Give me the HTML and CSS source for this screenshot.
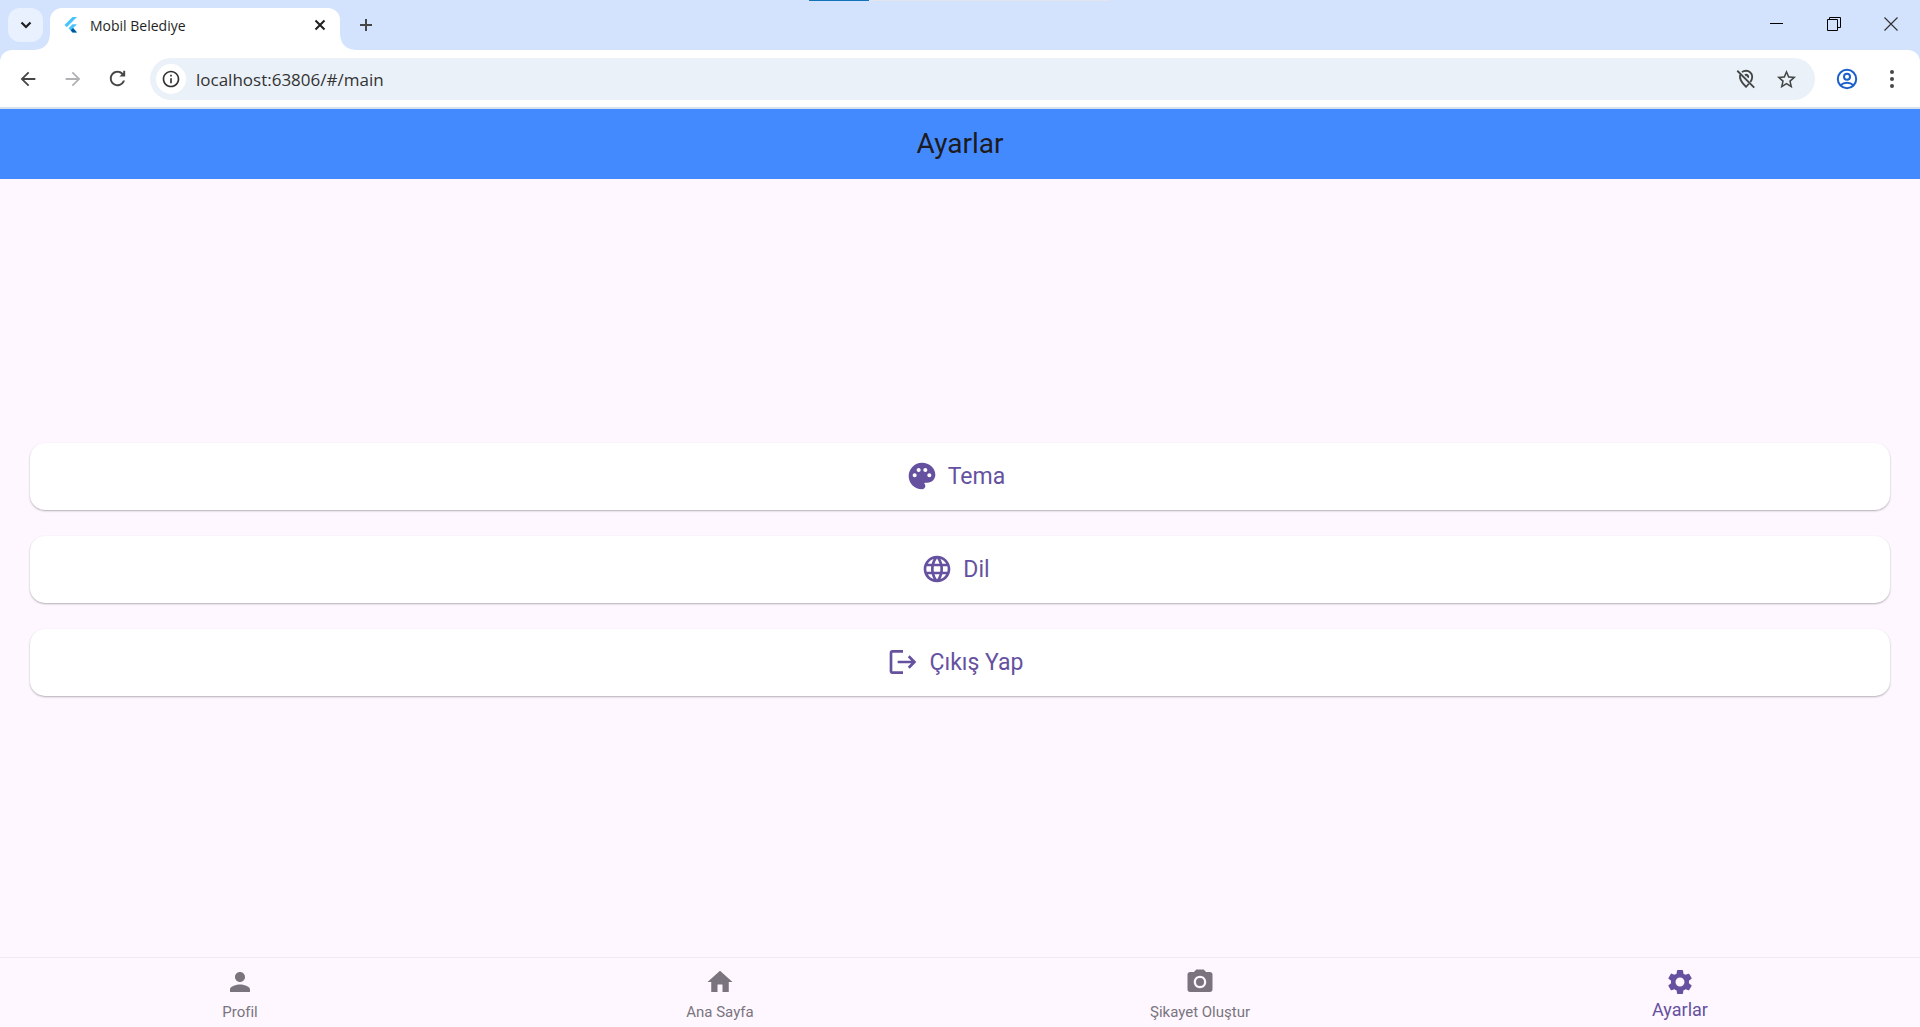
FILE: index.html
```html
<!DOCTYPE html>
<html lang="tr">
<head>
	<meta charset="UTF-8" />
	<title>Mobil Belediye</title>
	<link rel="stylesheet" href="styles.css">
</head>
<body>
	<div class="wrap">
		<div class="progress"></div>
		<div class="browser">
			<div class="tabs">
				<button class="tab-search" aria-label="Sekme ara">
					<svg width="12" height="12" viewBox="0 0 12 12"><path d="M1.500 3.500L6 8l4.500-4.500" fill="none" stroke="#1f1f1f" stroke-width="2.200"/></svg>
				</button>
				<div class="tab active">
					<svg width="14" height="16" viewBox="0 0 14 16">
						<path d="M8.500 0H13L2.700 10.200.5 7.900z" fill="#47c5fb"/>
						<path d="M8.500 7.300H13L9.200 11 13 15.500H8.500L4.500 11.200z" fill="#47c5fb"/>
						<path d="M6.700 13.300L9 11l4 4.500H8.500z" fill="#00569e"/>
					</svg>
					<span class="tab-title">Mobil Belediye</span>
					<button class="tab-close" aria-label="Kapat">
						<svg width="12" height="12" viewBox="0 0 12 12"><path d="M1.500 1.500l9 9M10.500 1.500l-9 9" stroke="#1f1f1f" stroke-width="2"/></svg>
					</button>
				</div>
				<button class="tab-new" aria-label="Yeni sekme">
					<svg width="14" height="14" viewBox="0 0 14 14"><path d="M7 1v12M1 7h12" stroke="#444746" stroke-width="2"/></svg>
				</button>
				<div class="win">
					<button aria-label="Simge durumuna küçült"><svg width="14" height="14" viewBox="0 0 14 14"><path d="M0 6.500h13" stroke="#000"/></svg></button>
					<button aria-label="Geri yükle"><svg width="14" height="14" viewBox="0 0 14 14"><path d="M.5 2.500h10v11H.5zM2.500 2.500v-2h11v10H11" fill="none" stroke="#000"/></svg></button>
					<button aria-label="Pencereyi kapat"><svg width="14" height="14" viewBox="0 0 14 14"><path d="M.5.5l13 13M13.500.5l-13 13" stroke="#333" stroke-width="1.200"/></svg></button>
				</div>
			</div>
			<div class="toolbar">
				<button class="tool" aria-label="Geri"><svg width="22" height="22" viewBox="0 0 24 24" fill="#444746"><path d="M20 11H7.830l5.590-5.590L12 4l-8 8 8 8 1.410-1.410L7.830 13H20v-2z"/></svg></button>
				<button class="tool" aria-label="İleri"><svg width="22" height="22" viewBox="0 0 24 24" fill="#b0b2b3"><path d="M12 4l-1.410 1.410L16.170 11H4v2h12.170l-5.580 5.590L12 20l8-8z"/></svg></button>
				<button class="tool" aria-label="Yenile"><svg width="23" height="23" viewBox="0 0 24 24" fill="#444746"><path d="M17.650 6.350C16.200 4.900 14.210 4 12 4c-4.420 0-7.990 3.580-7.990 8s3.570 8 7.990 8c3.730 0 6.840-2.550 7.730-6h-2.080c-.82 2.330-3.040 4-5.650 4-3.310 0-6-2.690-6-6s2.690-6 6-6c1.660 0 3.140.69 4.220 1.780L14 10h6V4h-2v2z"/></svg></button>
				<div class="address">
					<button class="info" aria-label="Site bilgileri"><svg width="20" height="20" viewBox="0 0 24 24" fill="#333"><path d="M11 7h2v2h-2zm0 4h2v6h-2zm1-9C6.480 2 2 6.480 2 12s4.480 10 10 10 10-4.480 10-10S17.520 2 12 2zm0 18c-4.410 0-8-3.590-8-8s3.590-8 8-8 8 3.590 8 8-3.590 8-8 8z"/></svg></button>
					<input type="text" aria-label="Adres" value="localhost:63806/#/main">
					<button class="addr-btn" aria-label="Konum engellendi"><svg width="22" height="22" viewBox="0 0 24 24" fill="none" stroke="#444746" stroke-width="2"><path d="M2.500 3L21 21.500M7.500 4.500C8.800 3.500 10.300 3 12 3c3.600 0 6.800 2.800 6.800 6.600 0 1.800-.7 3.700-2 5.600M5.500 7.500c-.9 4.300 1.700 8.500 6.500 13 1.200-1.200 2.200-2.300 3-3.300"/><path d="M11 8a2 2 0 0 1 3 2.500" stroke-width="2.500"/></svg></button>
					<button class="addr-btn" aria-label="Yer işareti"><svg width="23" height="23" viewBox="0 0 24 24" fill="#444746"><path d="M22 9.240l-7.190-.62L12 2 9.190 8.630 2 9.240l5.460 4.730L5.820 21 12 17.270 18.180 21l-1.630-7.030L22 9.240zM12 15.400l-3.760 2.270 1-4.280-3.320-2.880 4.380-.38L12 6.100l1.710 4.040 4.380.38-3.320 2.880 1 4.280L12 15.400z"/></svg></button>
				</div>
				<button class="tool" aria-label="Hesap"><svg width="24" height="24" viewBox="0 0 24 24" fill="none" stroke="#1a5fcb" stroke-width="2"><circle cx="12" cy="12" r="9.200"/><circle cx="12" cy="9.700" r="3"/><path d="M5.500 18.200c3.700-3.200 9.300-3.200 13 0"/></svg></button>
				<button class="tool" aria-label="Menü"><svg width="24" height="24" viewBox="0 0 24 24" fill="#444746"><circle cx="12" cy="5" r="2"/><circle cx="12" cy="12" r="2"/><circle cx="12" cy="19" r="2"/></svg></button>
			</div>
		</div>
		<h1 class="header">Ayarlar</h1>
		<div class="content">
			<button class="item">
				<svg width="32" height="32" viewBox="0 0 24 24"><path d="M12 2C6.490 2 2 6.490 2 12s4.490 10 10 10c1.380 0 2.500-1.120 2.500-2.500 0-.61-.23-1.200-.64-1.670-.08-.1-.13-.21-.13-.33 0-.28.22-.5.5-.5H16c3.310 0 6-2.690 6-6 0-4.960-4.490-9-10-9zm-5.500 11c-.83 0-1.500-.67-1.500-1.500S5.670 10 6.500 10s1.500.67 1.500 1.500S7.330 13 6.500 13zm3-4C8.670 9 8 8.330 8 7.500S8.670 6 9.500 6s1.500.67 1.500 1.500S10.330 9 9.500 9zm5 0c-.83 0-1.500-.67-1.500-1.500S13.670 6 14.500 6s1.500.67 1.500 1.500S15.330 9 14.500 9zm3 4c-.83 0-1.500-.67-1.500-1.500s.67-1.500 1.500-1.500 1.500.67 1.500 1.500-.67 1.500-1.500 1.500z"/></svg>
				<span>Tema</span>
			</button>
			<button class="item">
				<svg width="32" height="32" viewBox="0 0 24 24"><path d="M11.990 2C6.470 2 2 6.480 2 12s4.470 10 9.990 10C17.520 22 22 17.520 22 12S17.520 2 11.990 2zm6.930 6h-2.950c-.32-1.250-.78-2.450-1.380-3.560 1.840.63 3.370 1.910 4.330 3.560zM12 4.040c.83 1.200 1.480 2.530 1.910 3.960h-3.820c.43-1.430 1.080-2.760 1.910-3.960zM4.260 14C4.100 13.360 4 12.690 4 12s.1-1.360.26-2h3.380c-.08.66-.14 1.320-.14 2s.06 1.340.14 2H4.260zm.82 2h2.950c.32 1.250.78 2.450 1.380 3.560-1.840-.63-3.370-1.900-4.330-3.560zm2.950-8H5.080c.96-1.660 2.490-2.930 4.330-3.560C8.810 5.550 8.350 6.750 8.030 8zM12 19.960c-.83-1.200-1.480-2.530-1.910-3.960h3.820c-.43 1.430-1.080 2.760-1.910 3.960zM14.340 14H9.660c-.09-.66-.16-1.320-.16-2s.07-1.350.16-2h4.680c.09.65.16 1.320.16 2s-.07 1.340-.16 2zm.25 5.560c.6-1.110 1.060-2.310 1.380-3.560h2.950c-.96 1.650-2.490 2.930-4.330 3.560zM16.360 14c.08-.66.14-1.320.14-2s-.06-1.340-.14-2h3.380c.16.64.26 1.310.26 2s-.1 1.360-.26 2h-3.380z"/></svg>
				<span>Dil</span>
			</button>
			<button class="item">
				<svg width="32" height="32" viewBox="0 0 24 24"><path d="M17 7l-1.410 1.410L18.170 11H8v2h10.170l-2.580 2.580L17 17l5-5zM4 5h8V3H4c-1.100 0-2 .9-2 2v14c0 1.100.9 2 2 2h8v-2H4V5z"/></svg>
				<span>Çıkış Yap</span>
			</button>
		</div>
		<nav class="nav">
			<a class="nav-item" href="#profil">
				<svg width="30" height="30" viewBox="0 0 24 24"><path d="M12 12c2.210 0 4-1.790 4-4s-1.790-4-4-4-4 1.790-4 4 1.790 4 4 4zm0 2c-2.670 0-8 1.340-8 4v2h16v-2c0-2.660-5.330-4-8-4z"/></svg>
				<span>Profil</span>
			</a>
			<a class="nav-item" href="#anasayfa">
				<svg width="30" height="30" viewBox="0 0 24 24"><path d="M10 20v-6h4v6h5v-8h3L12 3 2 12h3v8z"/></svg>
				<span>Ana Sayfa</span>
			</a>
			<a class="nav-item" href="#sikayet">
				<svg width="30" height="30" viewBox="0 0 24 24"><path d="M9 2L7.170 4H4c-1.100 0-2 .9-2 2v12c0 1.100.9 2 2 2h16c1.100 0 2-.9 2-2V6c0-1.100-.9-2-2-2h-3.170L15 2H9zm3 15c-2.760 0-5-2.240-5-5s2.240-5 5-5 5 2.240 5 5-2.240 5-5 5z"/><circle cx="12" cy="12" r="3.200"/></svg>
				<span>Şikayet Oluştur</span>
			</a>
			<a class="nav-item active" href="#ayarlar">
				<svg width="30" height="30" viewBox="0 0 24 24"><path d="M19.140 12.940c.04-.3.06-.61.06-.94 0-.32-.02-.64-.07-.94l2.030-1.580c.18-.14.23-.41.12-.61l-1.920-3.320c-.12-.22-.37-.29-.59-.22l-2.390.96c-.5-.38-1.030-.7-1.620-.94l-.36-2.540c-.04-.24-.24-.41-.48-.41h-3.840c-.24 0-.43.17-.47.41l-.36 2.540c-.59.24-1.130.57-1.620.94l-2.390-.96c-.22-.08-.47 0-.59.22L2.740 8.870c-.12.21-.08.47.12.61l2.030 1.580c-.05.3-.09.63-.09.94s.02.64.07.94l-2.030 1.580c-.18.14-.23.41-.12.61l1.920 3.320c.12.22.37.29.59.22l2.390-.96c.5.38 1.030.7 1.620.94l.36 2.540c.05.24.24.41.48.41h3.840c.24 0 .44-.17.47-.41l.36-2.540c.59-.24 1.130-.56 1.620-.94l2.390.96c.22.08.47 0 .59-.22l1.920-3.320c.12-.22.07-.47-.12-.61l-2.010-1.580zM12 15.600c-1.980 0-3.600-1.620-3.600-3.600s1.620-3.600 3.600-3.600 3.600 1.620 3.600 3.600-1.620 3.600-3.600 3.600z"/></svg>
				<span>Ayarlar</span>
			</a>
		</nav>
	</div>
</body>
</html>
```
FILE: styles.css
```css
*{
	box-sizing:border-box;
}
body{
	margin:0;
	font-family:Roboto,"Liberation Sans",sans-serif;
	background-color:#fef7ff;
}
button{
	border:0;
	padding:0;
	background:none;
	font-family:inherit;
	display:flex;
	align-items:center;
	justify-content:center;
}
svg{
	display:block;
	flex:none;
}
.wrap{
	position:relative;
	min-height:100vh;
	display:flex;
	flex-direction:column;
}
.progress{
	position:absolute;
	top:0;
	left:809px;
	width:300px;
	height:1px;
	background:linear-gradient(to right,#1173b8 60px,#e3e5ee 60px);
}
.browser{
	background-color:#d3e3fd;
}

/* tabs */
.tabs{
	height:50px;
	padding-left:8px;
	display:flex;
}
.tab-search{
	width:35px;
	height:34px;
	margin-top:8px;
	border-radius:12px;
	background-color:#e9f1fe;
}
.tab{
	position:relative;
	width:290px;
	height:42px;
	margin:8px 0 0 7px;
	padding:0 12px 8px 14px;
	border-radius:12px 12px 0 0;
	background-color:#fff;
	display:flex;
	align-items:center;
	gap:12px;
}
.tab:before,.tab:after{
	content:"";
	position:absolute;
	bottom:0;
	width:14px;
	height:14px;
}
.tab:before{
	right:100%;
	background:radial-gradient(circle at 0 0,transparent 13px,#fff 14px);
}
.tab:after{
	left:100%;
	background:radial-gradient(circle at 100% 0,transparent 13px,#fff 14px);
}
.tab-title{
	flex:1;
	padding-top:2px;
	font-family:"Open Sans","Noto Sans",sans-serif;
	font-size:14px;
	line-height:20px;
	color:#1f1f1f;
}
.tab-close{
	width:16px;
	height:16px;
}
.tab-new{
	width:34px;
	height:34px;
	margin:8px 0 0 9px;
}
.win{
	margin-left:auto;
	padding-right:1px;
	display:flex;
}
.win button{
	width:57px;
	height:48px;
}

/* toolbar */
.toolbar{
	height:59px;
	padding:0 6px 0 5px;
	border-bottom:2px solid #d5e2ee;
	border-radius:12px 12px 0 0;
	background-color:#fff;
	display:flex;
	align-items:center;
}
.tool{
	width:45px;
	height:40px;
}
.address{
	flex:1;
	height:42px;
	margin:1px 9px 0 10px;
	padding:0 9px 0 6px;
	border-radius:21px;
	background-color:#eaf1f9;
	display:flex;
	align-items:center;
}
.info{
	width:30px;
	height:30px;
	border-radius:50%;
	background-color:#fff;
}
.address input{
	flex:1;
	min-width:0;
	margin-left:10px;
	padding:0;
	border:0;
	outline:0;
	background:none;
	font-family:"Open Sans","Noto Sans",sans-serif;
	font-size:17px;
	color:#333;
}
.addr-btn{
	width:40px;
	height:40px;
}

/* page */
.header{
	margin:0;
	height:70px;
	line-height:70px;
	text-align:center;
	font-size:28px;
	font-weight:400;
	color:#1d1b20;
	background-color:#448aff;
}
.content{
	flex:1;
	padding:2px 30px 0;
	display:flex;
	flex-direction:column;
	justify-content:center;
	gap:26px;
}
.item{
	height:67px;
	padding-right:9px;
	gap:10px;
	border-radius:15px;
	background-color:#fff;
	box-shadow:0 1px 2px rgba(0,0,0,.3);
	font-size:23px;
	color:#65519f;
}
.item svg,.nav-item svg{
	fill:currentColor;
}

/* bottom nav */
.nav{
	height:70px;
	border-top:1px solid #f0eaf5;
	display:flex;
}
.nav-item{
	flex:1;
	padding-top:9px;
	display:flex;
	flex-direction:column;
	align-items:center;
	gap:4px;
	font-size:15px;
	line-height:22px;
	color:#79747e;
	text-decoration:none;
}
.nav-item.active{
	gap:2px;
	font-size:18px;
	color:#65519f;
}
```
